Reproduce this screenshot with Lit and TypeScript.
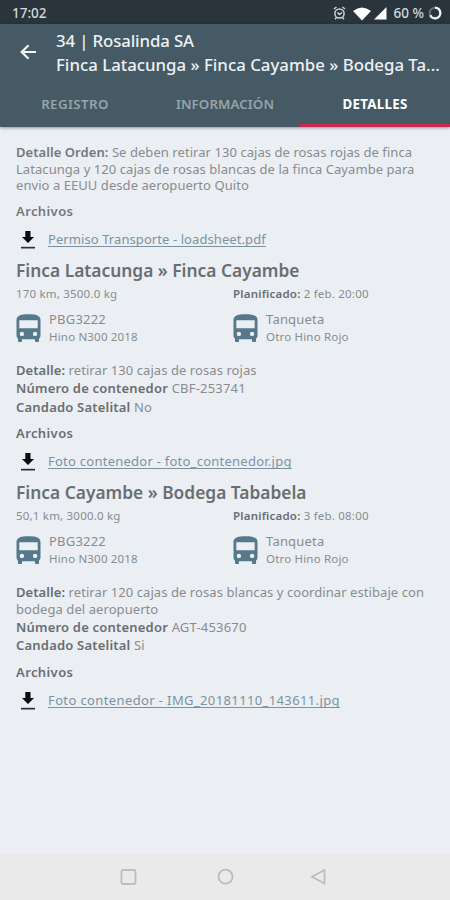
import { LitElement, html, css, svg } from "lit";
import { customElement, property } from "lit/decorators.js";

interface Leg {
  title: string;
  load: string;
  planned: string;
  detail: string[];
  container: string;
  lock: string;
  file: string;
  fileKind: string;
}

const legs: Leg[] = [
  {
    title: "Finca Latacunga » Finca Cayambe",
    load: "170 km, 3500.0 kg",
    planned: "2 feb. 20:00",
    detail: ["retirar 130 cajas de rosas rojas"],
    container: "CBF-253741",
    lock: "No",
    file: "Foto contenedor - foto_contenedor.jpg",
    fileKind: "photo",
  },
  {
    title: "Finca Cayambe » Bodega Tababela",
    load: "50,1 km, 3000.0 kg",
    planned: "3 feb. 08:00",
    detail: ["retirar 120 cajas de rosas blancas y coordinar estibaje con", "bodega del aeropuerto"],
    container: "AGT-453670",
    lock: "Si",
    file: "Foto contenedor - IMG_20181110_143611.jpg",
    fileKind: "image",
  },
];

const busIcon = html`<svg class="bus" viewBox="0 0 25 28">
  ${svg`<path fill="#55798a" fill-rule="evenodd" d="M.5 6C.5 1.5 5 .3 12.500 .3S24.500 1.500 24.500 6v15.500c0 1.400-.6 2.400-1.500 3.200v2.200c0 .7-.5 1.100-1.100 1.100h-1.700c-.7 0-1.200-.5-1.200-1.100V25.300H6v1.600C6 27.500 5.500 28 4.800 28H3.100C2.500 28 2 27.600 2 26.900v-2.200C1.100 23.900.5 22.900.5 21.500zM3.300 6.300V14.200H21.700V6.300zM5.900 17.700a2.200 2.200 0 1 0 0 4.400a2.200 2.200 0 1 0 0-4.400zM19.100 17.700a2.200 2.200 0 1 0 0 4.400a2.200 2.200 0 1 0 0-4.400z"/>`}
</svg>`;

const downloadIcon = html`<svg class="download" viewBox="0 0 14 18">
  <path fill="#0b0c0d" d="M4.300 0h5.200v6H13L7 12 1 6h3.300z" />
  <path fill="#2c2f31" d="M0 15.800h14v1.700H0z" />
</svg>`;

@customElement("file-link")
export class FileLink extends LitElement {
  @property() name = "";
  @property() kind = "";

  static styles = css`
    :host { display: block; }
    .row { display: flex; align-items: center; height: 24px; padding-left: 5px; }
    .download { width: 14px; height: 18px; flex: none; margin: 2px 13px 0 0; }
    .link {
      color: #7b939f; font-size: 13px; line-height: 16px; white-space: nowrap;
      text-decoration: underline; text-decoration-thickness: 1px; text-underline-offset: 2px;
      text-decoration-skip-ink: none;
    }
    .sheet { letter-spacing: 0.08px; }
    .photo { letter-spacing: 0.25px; }
    .image { letter-spacing: 0.38px; }
  `;

  render() {
    return html`<div class="row">${downloadIcon}<a class="link ${this.kind}">${this.name}</a></div>`;
  }
}

@customElement("leg-section")
export class LegSection extends LitElement {
  @property({ attribute: false }) leg!: Leg;

  static styles = css`
    :host { display: block; }
    .title {
      margin: 0; height: 24px; line-height: 24px; font-size: 17.350px; font-weight: 600;
      color: #696e71; white-space: nowrap;
    }
    .cols { display: grid; grid-template-columns: 217px 1fr; }
    .meta { margin-top: 4px; height: 16px; line-height: 16px; font-size: 11.500px; letter-spacing: 0.2px; }
    .vehicles { margin-top: 9px; height: 34px; }
    .vehicle { display: flex; }
    .bus { width: 25px; height: 28px; margin: 3px 8px 0 0; flex: none; }
    .plate { font-size: 13px; line-height: 17px; height: 17px; letter-spacing: 0.2px; }
    .model { font-size: 11.500px; line-height: 17px; height: 17px; letter-spacing: 0.18px; }
    .facts { margin-top: 17px; font-size: 13px; letter-spacing: 0.2px; }
    .fact { line-height: 18.500px; height: 18.500px; white-space: nowrap; }
    .detail { margin-bottom: 1px; letter-spacing: 0.07px; white-space: nowrap; }
    .first { line-height: 16.500px; height: 16.500px; }
    .more { line-height: 16px; height: 16px; }
    .files { height: 16px; line-height: 16px; margin: 9px 0 8px; font-size: 13px; letter-spacing: 0.4px; }
    b { font-weight: 600; color: #696e71; }
  `;

  render() {
    const l = this.leg;
    return html`
      <h2 class="title">${l.title}</h2>
      <div class="cols meta"><span>${l.load}</span><span><b>Planificado:</b> ${l.planned}</span></div>
      <div class="cols vehicles">
        <div class="vehicle">${busIcon}<div><div class="plate">PBG3222</div><div class="model">Hino N300 2018</div></div></div>
        <div class="vehicle">${busIcon}<div><div class="plate">Tanqueta</div><div class="model">Otro Hino Rojo</div></div></div>
      </div>
      <div class="facts">
        <div class="detail">
          <div class="first"><b>Detalle:</b> ${l.detail[0]}</div>
          ${l.detail.slice(1).map((d) => html`<div class="more">${d}</div>`)}
        </div>
        <div class="fact"><b>Número de contenedor</b> ${l.container}</div>
        <div class="fact"><b>Candado Satelital</b> ${l.lock}</div>
      </div>
      <div class="files"><b>Archivos</b></div>
      <file-link .name=${l.file} .kind=${l.fileKind}></file-link>
    `;
  }
}

@customElement("app-root")
export class AppRoot extends LitElement {
  static styles = css`
    :host {
      display: flex; flex-direction: column; width: 450px; height: 900px; overflow: hidden;
      background: #ebeff3; color: #888c8f; font-family: "Noto Sans", sans-serif; font-size: 13px;
    }
    .status {
      display: flex; align-items: center; height: 24px; flex: none; padding: 1px 8px 0 12px;
      box-sizing: border-box; background: #29343c; color: #d3d9dc; font-size: 13.500px; font-weight: 500;
    }
    .time { flex: 1; }
    .signals { display: block; width: 54px; height: 16px; margin-right: 7px; }
    .ring { width: 14px; height: 14px; margin-left: 4px; }
    .head { height: 103px; flex: none; background: #455a65; box-shadow: 0 1px 3px #0006; display: flex; flex-direction: column; }
    .bar { display: flex; height: 59px; box-sizing: border-box; padding: 5px 8px 0 20px; color: #edf1f3; }
    .back { width: 16px; height: 16px; margin: 15px 20px 0 0; flex: none; }
    .names { min-width: 0; font-size: 16.800px; line-height: 24px; font-weight: 500; white-space: nowrap; }
    .n1 { letter-spacing: -0.12px; }
    .n2 { letter-spacing: 0.01px; }
    .tabs { display: grid; grid-template-columns: repeat(3, 150px); flex: 1; }
    .tab {
      display: flex; align-items: center; justify-content: center; color: #96a4ac;
      font-size: 13.300px; font-weight: 600; letter-spacing: 0.1px; box-sizing: border-box; border-bottom: 3px solid transparent;
    }
    .tab:first-child { letter-spacing: 0.4px; }
    .tab.on { color: #fff; font-weight: 700; letter-spacing: 0.3px; border-bottom-color: #c62a50; }
    .body { flex: 1; padding: 17px 16px 0; min-height: 0; }
    .line { height: 16.500px; line-height: 16.500px; white-space: nowrap; letter-spacing: 0.06px; }
    .files { height: 16px; line-height: 16px; margin: 9px 0 8px; letter-spacing: 0.4px; }
    .sep { height: 7px; }
    b { font-weight: 600; color: #74797c; }
    .nav { height: 46px; flex: none; background: #eaeaea; display: block; }
  `;

  render() {
    return html`
      <div class="status">
        <span class="time">17:02</span>
        <svg class="signals" viewBox="0 0 54 16">
          <g fill="none" stroke="#cdd3d6" stroke-width="1.500">
            <circle cx="6.500" cy="8.500" r="4.600" />
            <path d="M1 4l2.500-2M12 4L9.500 2M4.500 7.500l2 2 2.500-2M3.500 12.500L2 14.200M9.500 12.500L11 14.200" />
          </g>
          <path fill="#fff" d="M20 6Q29 -1 38 6L29 15.500zM41 14.500L53.500 2v12.500z" />
        </svg>
        <span class="pct">60 %</span>
        <svg class="ring" viewBox="0 0 14 14">
          <circle cx="7" cy="7" r="5.300" fill="none" stroke="#64717a" stroke-width="2" />
          <path d="M7 1.700A5.300 5.300 0 1 1 2.200 9.200" fill="none" stroke="#f2f4f5" stroke-width="2.300" />
        </svg>
      </div>
      <div class="head">
        <div class="bar">
          <svg class="back" viewBox="0 0 16 16">
            <path d="M16 8H2M8.500 1.200L1.700 8l6.800 6.800" fill="none" stroke="#f4f7f8" stroke-width="2.200" />
          </svg>
          <div class="names"><div class="n1">34 | Rosalinda SA</div><div class="n2">Finca Latacunga » Finca Cayambe » Bodega Ta...</div></div>
        </div>
        <div class="tabs"><div class="tab">REGISTRO</div><div class="tab">INFORMACIÓN</div><div class="tab on">DETALLES</div></div>
      </div>
      <div class="body">
        <div class="line"><b>Detalle Orden:</b> Se deben retirar 130 cajas de rosas rojas de finca</div>
        <div class="line">Latacunga y 120 cajas de rosas blancas de la finca Cayambe para</div>
        <div class="line">envio a EEUU desde aeropuerto Quito</div>
        <div class="files"><b>Archivos</b></div>
        <file-link .name=${"Permiso Transporte - loadsheet.pdf"} .kind=${"sheet"}></file-link>
        <div class="sep"></div>
        <leg-section .leg=${legs[0]}></leg-section>
        <div class="sep"></div>
        <leg-section .leg=${legs[1]}></leg-section>
      </div>
      <svg class="nav" viewBox="0 0 450 46">
        <g fill="none" stroke="#bdbdbd" stroke-width="1.800">
          <rect x="121.500" y="16" width="14" height="14" rx="1.500" />
          <circle cx="225.500" cy="22.700" r="7" />
          <path d="M324.500 16v13.500L312 22.700z" />
        </g>
      </svg>
    `;
  }
}
